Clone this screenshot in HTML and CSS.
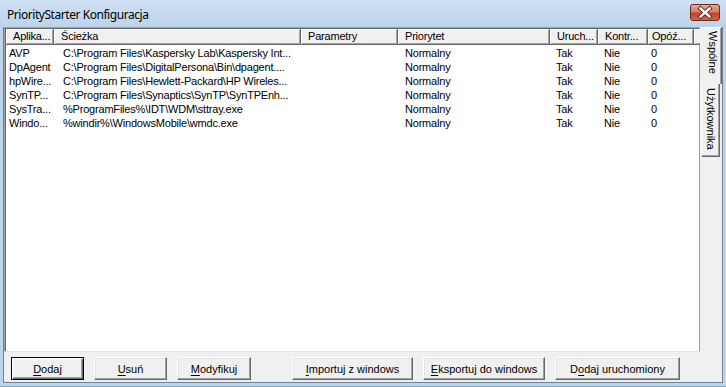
FILE: index.html
```html
<!DOCTYPE html>
<html lang="pl">
<head>
<meta charset="utf-8">
<title>PriorityStarter Konfiguracja</title>
<link rel="stylesheet" href="styles.css">
</head>
<body>
<div class="window">
  <div class="titlebar">
    <span class="title">PriorityStarter Konfiguracja</span>
    <div class="close">
      <svg width="30" height="17" viewBox="0 0 30 17">
        <path d="M10.5 4.5 L19.5 12.5 M19.5 4.5 L10.5 12.5" stroke="#5a1f16" stroke-width="4.2" stroke-linecap="square"/>
        <path d="M10.5 4.5 L19.5 12.5 M19.5 4.5 L10.5 12.5" stroke="#ffffff" stroke-width="2.4" stroke-linecap="square"/>
      </svg>
    </div>
  </div>
  <div class="client">
    <div class="main">
      <div class="list">
        <div class="header">
          <div class="hc c0">Aplika...</div>
          <div class="hc c1">Ścieżka</div>
          <div class="hc c2">Parametry</div>
          <div class="hc c3">Priorytet</div>
          <div class="hc c4">Uruch...</div>
          <div class="hc c5">Kontr...</div>
          <div class="hc c6">Opóź...</div>
          <div class="hc cf"></div>
        </div>
        <div class="rows">
          <div class="row"><span class="c0">AVP</span><span class="c1">C:\Program Files\Kaspersky Lab\Kaspersky Int...</span><span class="c2"></span><span class="c3">Normalny</span><span class="c4">Tak</span><span class="c5">Nie</span><span class="c6">0</span></div>
          <div class="row"><span class="c0">DpAgent</span><span class="c1">C:\Program Files\DigitalPersona\Bin\dpagent....</span><span class="c2"></span><span class="c3">Normalny</span><span class="c4">Tak</span><span class="c5">Nie</span><span class="c6">0</span></div>
          <div class="row"><span class="c0">hpWire...</span><span class="c1">C:\Program Files\Hewlett-Packard\HP Wireles...</span><span class="c2"></span><span class="c3">Normalny</span><span class="c4">Tak</span><span class="c5">Nie</span><span class="c6">0</span></div>
          <div class="row"><span class="c0">SynTP...</span><span class="c1">C:\Program Files\Synaptics\SynTP\SynTPEnh...</span><span class="c2"></span><span class="c3">Normalny</span><span class="c4">Tak</span><span class="c5">Nie</span><span class="c6">0</span></div>
          <div class="row"><span class="c0">SysTra...</span><span class="c1">%ProgramFiles%\IDT\WDM\sttray.exe</span><span class="c2"></span><span class="c3">Normalny</span><span class="c4">Tak</span><span class="c5">Nie</span><span class="c6">0</span></div>
          <div class="row"><span class="c0">Windo...</span><span class="c1">%windir%\WindowsMobile\wmdc.exe</span><span class="c2"></span><span class="c3">Normalny</span><span class="c4">Tak</span><span class="c5">Nie</span><span class="c6">0</span></div>
        </div>
      </div>
      <div class="tabs">
        <div class="tab active">Wspólne</div>
        <div class="tab">Użytkownika</div>
      </div>
    </div>
    <div class="buttons">
      <button class="btn default w73"><u>D</u>odaj</button>
      <button class="btn w73"><u>U</u>suń</button>
      <button class="btn w74"><u>M</u>odyfikuj</button>
      <button class="btn w121 gap"><u>I</u>mportuj z windows</button>
      <button class="btn w122"><u>E</u>ksportuj do windows</button>
      <button class="btn w125">D<u>o</u>daj uruchomiony</button>
    </div>
  </div>
</div>
</body>
</html>
```
FILE: styles.css
```css
* { box-sizing: border-box; }
html, body { margin: 0; padding: 0; }
body {
  width: 726px;
  height: 387px;
  overflow: hidden;
  font-family: "Liberation Sans", Arial, sans-serif;
  font-size: 11px;
  color: #000;
  background: #fff;
}
.window {
  width: 728px;
  height: 388px;
  margin: -1px 0 0 -1px;
  background: #bed4eb;
  padding: 0 3px 3px 3px;
  border: 1px solid #8aa4c0;
  border-radius: 6px 6px 0 0;
  display: flex;
  flex-direction: column;
}
.titlebar {
  height: 27px;
  flex: none;
  display: flex;
  align-items: center;
  justify-content: space-between;
  background: linear-gradient(#cfe0f3, #bcd3eb);
  margin: 0 -3px;
  padding-left: 7px;
  padding-right: 6px;
}
.title {
  font-family: "Noto Sans", "Liberation Sans", sans-serif;
  font-size: 12px;
  letter-spacing: -0.45px;
  color: #000;
  margin-top: 1px;
}
.close {
  width: 30px;
  height: 17px;
  margin-top: -2px;
  border: 1px solid #6b2a20;
  border-radius: 3px;
  background: linear-gradient(#e8a899 0%, #d67d68 45%, #c2432b 55%, #d0644a 100%);
  display: flex;
  align-items: center;
  justify-content: center;
  overflow: hidden;
}
.close svg { display: block; margin: -1px; }
.client {
  flex: 1;
  background: #f0f0f0;
  border: 1px solid #6f8195;
  border-top: none;
  display: flex;
  flex-direction: column;
}
.main {
  height: 325px;
  display: flex;
  flex: none;
}
.list {
  width: 696px;
  background: #fff;
  border-top: 1px solid #a0a0a0;
  border-left: 1px solid #a0a0a0;
  border-right: 1px solid #a0a0a0;
  border-bottom: 1px solid #e3e3e3;
  box-shadow: inset 1px 1px 0 #696969, inset -1px -1px 0 #fff;
  padding: 1px 0 0 0;
  display: flex;
  flex-direction: column;
  letter-spacing: -0.2px;
}
.header {
  display: flex;
  height: 16px;
  flex: none;
}
.hc {
  height: 16px;
  background: #f0f0f0;
  border-right: 1px solid #696969;
  border-bottom: 1px solid #696969;
  box-shadow: inset 1px 1px 0 #fff, inset -1px -1px 0 #a0a0a0;
  line-height: 15px;
  padding-left: 7px;
  white-space: nowrap;
  overflow: hidden;
}
.hc.c6 { padding-left: 4px; }
.hc.cf { flex: 1; border-right: none; }
.c0 { width: 48px; flex: none; }
.c1 { width: 247px; flex: none; }
.c2 { width: 97px; flex: none; }
.c3 { width: 152px; flex: none; }
.c4 { width: 48px; flex: none; }
.c5 { width: 50px; flex: none; }
.c6 { width: 46px; flex: none; }
.header .c0 { margin-left: 1px; }
.rows { padding-top: 1px; }
.row {
  display: flex;
  height: 14px;
  line-height: 14px;
  white-space: nowrap;
}
.row span { padding-left: 6px; }
.row .c0 { padding-left: 4px; width: 49px; }
.row .c1 { padding-left: 9px; }
.row .c3 { padding-left: 7px; }
.row .c6 { padding-left: 3px; }
.tabs {
  width: 22px;
  flex: none;
  display: flex;
  flex-direction: column;
}
.tab {
  writing-mode: vertical-rl;
  font-size: 11px;
  background: #f0f0f0;
  white-space: nowrap;
  line-height: 16px;
}
.tab.active {
  height: 57px;
  width: 22px;
  padding-top: 3px;
  padding-left: 2px;
  border-top: 1px solid #fff;
  border-right: 1px solid #696969;
  box-shadow: inset -1px 0 0 #a0a0a0;
}
.tab:not(.active) {
  height: 73px;
  width: 19px;
  margin-left: 1px;
  padding-top: 4px;
  padding-left: 1px;
  border-left: 1px solid #fff;
  border-right: 1px solid #696969;
  border-bottom: 1px solid #696969;
  box-shadow: inset -1px -1px 0 #a0a0a0;
}
.buttons {
  display: flex;
  gap: 10px;
  padding: 5px 0 0 7px;
}
.btn {
  height: 23px;
  font-family: "Liberation Sans", Arial, sans-serif;
  font-size: 11px;
  color: #000;
  background: #f0f0f0;
  border: 1px solid;
  border-color: #fff #696969 #696969 #fff;
  box-shadow: inset -1px -1px 0 #a0a0a0, inset 1px 1px 0 #e3e3e3;
  padding: 0;
  margin: 0;
  text-align: center;
  line-height: 20px;
}
.btn.default {
  border: 1px solid #000;
  box-shadow: inset 1px 1px 0 #fff, inset -1px -1px 0 #696969, inset -2px -2px 0 #a0a0a0;
}
.btn u { text-decoration: underline; text-underline-offset: 2px; }
.w73 { width: 73px; }
.w74 { width: 74px; }
.w121 { width: 121px; }
.w122 { width: 122px; }
.w125 { width: 125px; }
.gap { margin-left: 31px; }
```
